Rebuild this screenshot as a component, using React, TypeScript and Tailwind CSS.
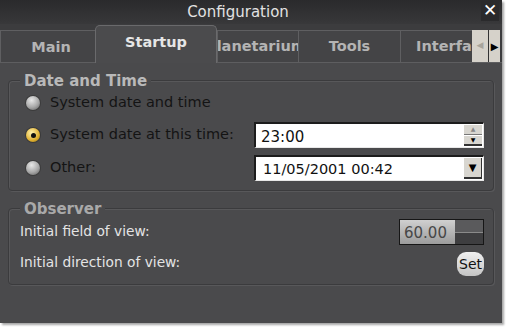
import React from "react";

const FONT = { fontFamily: '"DejaVu Sans", "Liberation Sans", sans-serif' };

function Radio({ checked }: { checked?: boolean }) {
  if (checked) {
    return (
      <span className="flex h-[14px] w-[14px] shrink-0 items-center justify-center rounded-full bg-[radial-gradient(circle_at_40%_35%,#fff3b0,#e0b030_60%,#8a6a10)] shadow-[0_0_0_1px_#3a3a3a]">
        <span className="h-[5px] w-[5px] rounded-full bg-[#111]" />
      </span>
    );
  }
  return (
    <span className="h-[14px] w-[14px] shrink-0 rounded-full bg-[radial-gradient(circle_at_40%_30%,#e8e8e8,#a8a8a8_55%,#5a5a5a)] shadow-[0_0_0_1px_#3c3c3c]" />
  );
}

function Tab({ label, selected, className }: { label: string; selected?: boolean; className: string }) {
  return (
    <div
      className={`flex shrink-0 items-center overflow-hidden whitespace-nowrap text-[14.5px] font-bold ${
        selected
          ? "h-[38px] rounded-t-[5px] border border-b-0 border-[#6a6a6c] bg-[#4b4b4d] text-[#e6e6e6]"
          : "h-[32px] border-t border-l border-[#5f5f61] bg-[#444446] text-[#b4b4b4]"
      } ${className}`}
    >
      {label}
    </div>
  );
}

export default function App() {
  return (
    <div className="h-[327px] w-[508px] bg-white text-[13.75px]" style={FONT}>
      <div className="flex h-[323px] w-[502px] flex-col bg-[#4a4a4c] shadow-[2px_2px_2px_rgba(0,0,0,0.35)]">
        {/* title bar */}
        <div className="relative flex h-[24px] items-center justify-center bg-gradient-to-b from-[#2a2a2c] to-[#38383a] pr-[26px] text-[15px] text-[#e2e2e2]">
          Configuration
          <span className="absolute right-[3px] top-[1px] flex h-[20px] w-[18px] items-center justify-center bg-[#2a2a2c] text-[17px] font-bold text-white">
            ✕
          </span>
        </div>

        {/* tabs */}
        <div className="flex h-[39px] items-end border-b border-[#5e5e60] bg-[#3c3c3e]">
          <Tab label="Main" className="w-[95px] justify-center pt-[2px] pl-[6px]" />
          <Tab label="Startup" selected className="-mb-px w-[122px] justify-center pb-[3px]" />
          <Tab label="Planetarium" className="w-[81px] justify-start pl-0 [&]:indent-[-12px]" />
          <Tab label="Tools" className="w-[102px] justify-center" />
          <Tab label="Interface" className="w-[72px] justify-start pl-[15px]" />
          <div className="flex h-[32px] w-[16px] shrink-0 items-center justify-center bg-[#d6d2ca] text-[9px] text-[#a8a49c]">
            ◀
          </div>
          <div className="flex h-[32px] w-[12px] shrink-0 items-center justify-center border-l border-[#333] bg-[#d6d2ca] text-[10px] text-black">
            ▶
          </div>
        </div>

        {/* content */}
        <div className="flex flex-col px-[8px] pt-[9px]">
          {/* Date and Time */}
          <div className="relative mt-[8px] h-[111px] rounded-[4px] border border-[#3b3b3d] shadow-[inset_1px_1px_0_#58585a,1px_1px_0_#58585a]">
            <span className="absolute -top-[11px] left-[11px] bg-[#4a4a4c] px-[4px] text-[15px] font-bold text-[#b9b9b9]">
              Date and Time
            </span>
            <div className="flex flex-col pl-[17px] pt-[13px] pr-[9px] text-[14.5px]">
              <div className="flex h-[18px] items-center gap-[10px] text-[#141414]">
                <Radio />
                System date and time
              </div>
              <div className="mt-[10px] flex h-[26px] items-center">
                <div className="flex items-center gap-[10px] text-[#141414]">
                  <Radio checked />
                  System date at this time:
                </div>
                <div className="ml-auto flex h-[26px] w-[230px] border border-t-2 border-l-2 border-[#1c1c1c] border-b-[#e8e8e8] border-r-[#e8e8e8] bg-white">
                  <span className="flex-1 pl-[5px] pt-[2px] text-[15px] text-[#111]">23:00</span>
                  <div className="flex w-[19px] flex-col gap-px py-px pr-px">
                    <span className="flex flex-1 items-start justify-center border-b border-[#777] bg-[#d8d6d0] text-[6px] leading-[8px] text-[#888]">▲</span>
                    <span className="flex flex-1 items-center justify-center border-b-2 border-[#333] bg-[#d8d6d0] text-[6px] leading-none text-black">▼</span>
                  </div>
                </div>
              </div>
              <div className="mt-[7px] flex h-[26px] items-center">
                <div className="flex items-center gap-[10px] text-[#141414]">
                  <Radio />
                  Other:
                </div>
                <div className="ml-auto flex h-[26px] w-[230px] border border-t-2 border-l-2 border-[#1c1c1c] border-b-[#e8e8e8] border-r-[#e8e8e8] bg-white">
                  <span className="flex-1 pl-[7px] pt-[2px] text-[14.5px] text-[#111]">11/05/2001 00:42</span>
                  <span className="m-px flex w-[18px] items-center justify-center border-b-2 border-r border-[#333] bg-[#d8d6d0] text-[10px] text-black">
                    ▼
                  </span>
                </div>
              </div>
            </div>
          </div>

          {/* Observer */}
          <div className="relative mt-[17px] h-[77px] rounded-[4px] border border-[#3b3b3d] shadow-[inset_1px_1px_0_#58585a,1px_1px_0_#58585a]">
            <span className="absolute -top-[11px] left-[11px] bg-[#4a4a4c] px-[4px] text-[15px] font-bold text-[#a9a9a9]">
              Observer
            </span>
            <div className="flex flex-col pl-[11px] pr-[9px] pt-[10px] text-[#e4e4e4]">
              <div className="flex h-[26px] items-center">
                <span className="pb-[2px]">Initial field of view:</span>
                <div className="ml-auto flex h-[26px] w-[85px] border border-[#161616] bg-gradient-to-b from-[#d0d0d0] to-[#9c9c9c]">
                  <span className="flex-1 pl-[4px] pt-[2px] text-[15px] text-[#474747]">60.00</span>
                  <div className="flex w-[28px] flex-col bg-[#4e4e50]">
                    <span className="flex-1 border-b border-[#8a8a8a] bg-[#5a5a5c]" />
                    <span className="flex-1 bg-[#3e3e40]" />
                  </div>
                </div>
              </div>
              <div className="mt-[7px] flex h-[24px] items-center">
                <span className="pb-[4px]">Initial direction of view:</span>
                <span className="ml-auto flex h-[24px] w-[27px] items-center justify-center rounded-[9px] bg-gradient-to-b from-[#f0f0f0] to-[#c4c4c4] text-[14px] text-[#111]">
                  Set
                </span>
              </div>
            </div>
          </div>
        </div>
      </div>
    </div>
  );
}
